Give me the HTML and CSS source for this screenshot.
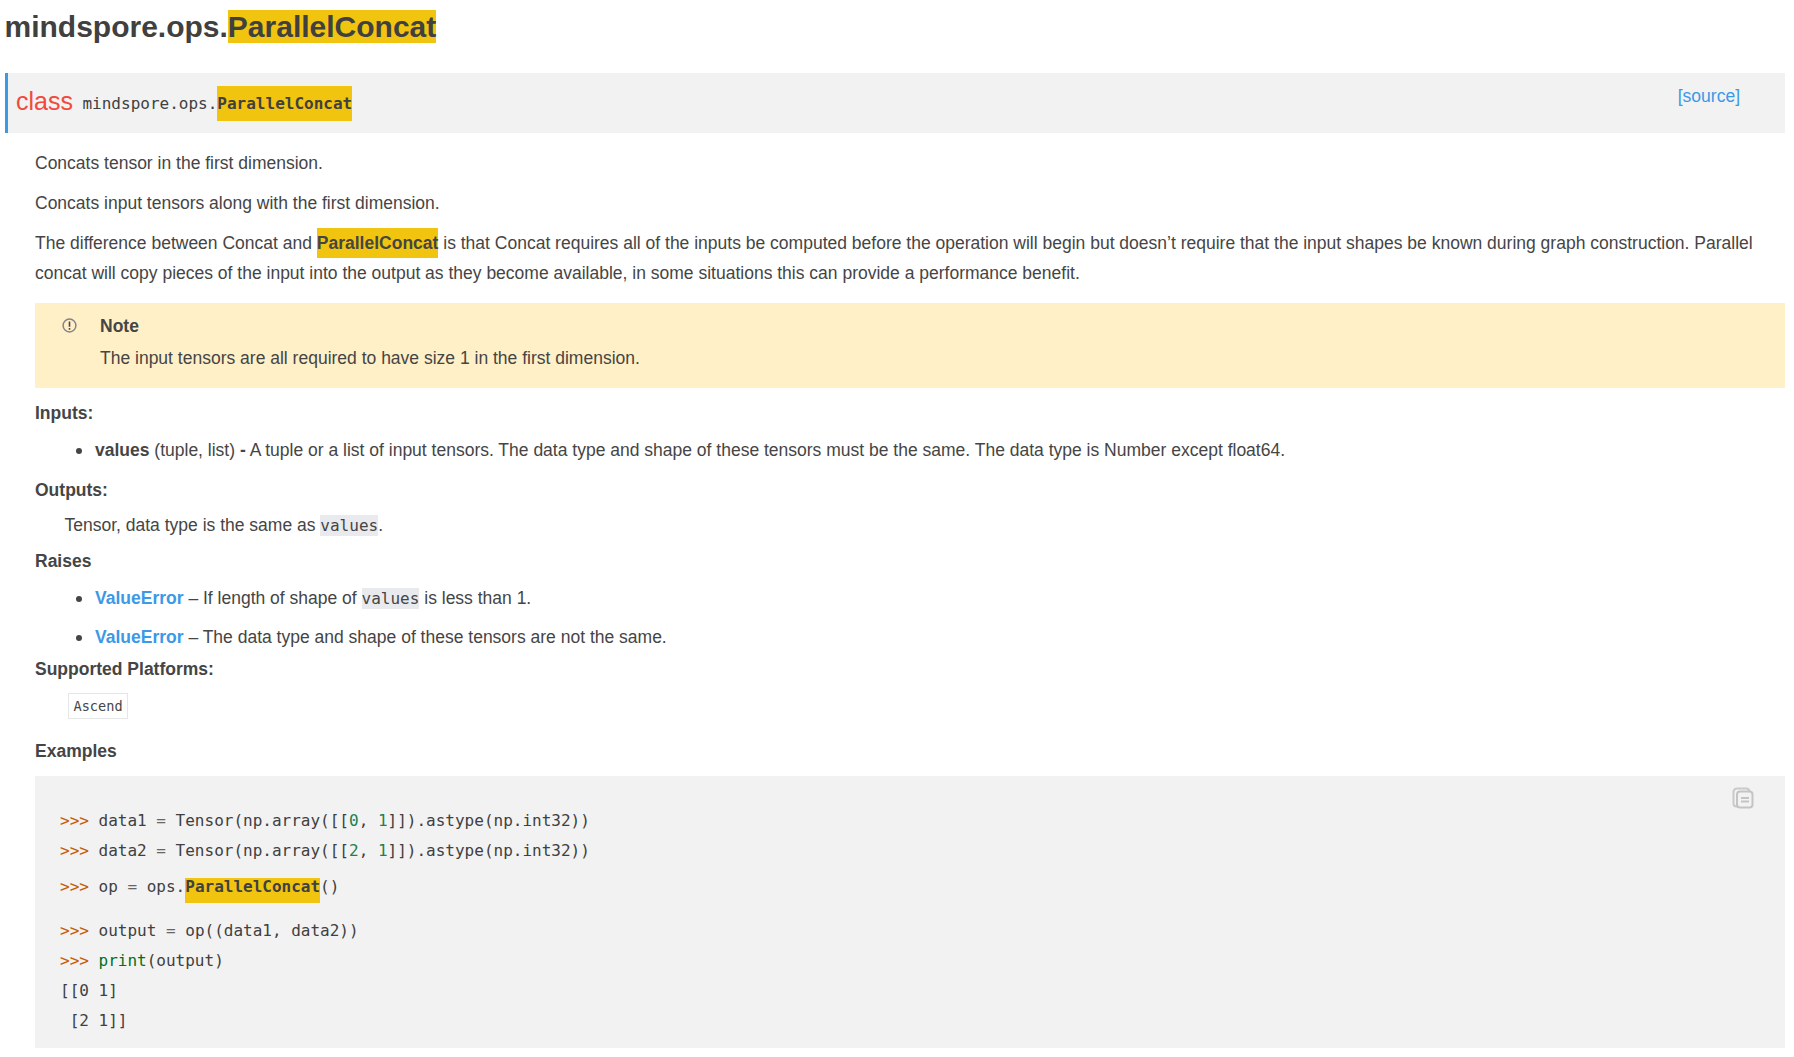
FILE: index.html
```html
<!DOCTYPE html>
<html lang="en">
<head>
<meta charset="utf-8">
<title>mindspore.ops.ParallelConcat</title>
<link rel="stylesheet" href="styles.css">
</head>
<body>
<main class="page">
  <h1 class="title">mindspore.ops.<span class="hl">ParallelConcat</span></h1>
  <section class="api">
    <div class="sig">
      <div class="sig-name">
        <span class="kw">class</span>
        <code class="sig-code">mindspore.ops.<span class="hl sig-hl">ParallelConcat</span></code>
      </div>
      <a class="source" href="#">[source]</a>
    </div>
    <div class="doc">
      <p class="p p-first">Concats tensor in the first dimension.</p>
      <p class="p p-next">Concats input tensors along with the first dimension.</p>
      <p class="p p-next">The difference between Concat and <strong class="hl para-hl">ParallelConcat</strong> is that Concat requires all of the inputs be computed before the operation will begin but doesn’t require that the input shapes be known during graph construction. Parallel concat will copy pieces of the input into the output as they become available, in some situations this can provide a performance benefit.</p>
      <aside class="note">
        <svg class="note-icon" viewBox="0 0 15 15" width="15" height="15" aria-hidden="true"><circle cx="7.500" cy="7.500" r="6.400" fill="none" stroke="#858585" stroke-width="1.500"/><path d="M7.500 3.400v5.400M7.500 10v1.700" stroke="#4a4a4a" stroke-width="1.600" fill="none"/></svg>
        <div class="note-body">
          <div class="note-title">Note</div>
          <div class="note-text">The input tensors are all required to have size 1 in the first dimension.</div>
        </div>
      </aside>
      <div class="label label-inputs">Inputs:</div>
      <ul class="list list-inputs">
        <li><strong>values</strong> (tuple, list) <strong>-</strong> A tuple or a list of input tensors. The data type and shape of these tensors must be the same. The data type is Number except float64.</li>
      </ul>
      <div class="label label-outputs">Outputs:</div>
      <p class="p outputs-text">Tensor, data type is the same as <code class="chip">values</code>.</p>
      <div class="label label-raises">Raises</div>
      <ul class="list list-raises">
        <li><a class="link" href="#">ValueError</a> – If length of shape of <code class="chip">values</code> is less than 1.</li>
        <li class="li-next"><a class="link" href="#">ValueError</a> – The data type and shape of these tensors are not the same.</li>
      </ul>
      <div class="label label-platforms">Supported Platforms:</div>
      <code class="platform">Ascend</code>
      <div class="label label-examples">Examples</div>
      <div class="code">
        <svg class="copy" viewBox="0 0 22 22" width="22" height="22" aria-hidden="true"><path d="M6 19.500H4.500A3 3 0 0 1 1.500 16.500V5A3.500 3.500 0 0 1 5 1.500H14A3.500 3.500 0 0 1 17.500 4" fill="none" stroke="#c9c9c9" stroke-width="2"/><rect x="5" y="4.500" width="15.500" height="16" rx="3" fill="#f2f2f2" stroke="#c4c4c4" stroke-width="2"/><path d="M9 11h8M9 14.500h8" stroke="#c4c4c4" stroke-width="1.800" fill="none"/></svg>
        <div class="line"><span class="gp">&gt;&gt;&gt; </span>data1 <span class="o">=</span> Tensor(np.array([[<span class="m">0</span>, <span class="m">1</span>]]).astype(np.int32))</div>
        <div class="line"><span class="gp">&gt;&gt;&gt; </span>data2 <span class="o">=</span> Tensor(np.array([[<span class="m">2</span>, <span class="m">1</span>]]).astype(np.int32))</div>
        <div class="line line-hl"><span class="gp">&gt;&gt;&gt; </span>op <span class="o">=</span> ops.<span class="hl code-hl">ParallelConcat</span>()</div>
        <div class="line"><span class="gp">&gt;&gt;&gt; </span>output <span class="o">=</span> op((data1, data2))</div>
        <div class="line"><span class="gp">&gt;&gt;&gt; </span><span class="nb">print</span>(output)</div>
        <div class="line">[[0 1]</div>
        <div class="line"> [2 1]]</div>
      </div>
    </div>
  </section>
</main>
</body>
</html>
```

FILE: styles.css
```css
html, body {
  margin: 0;
  background: #fff;
}
body {
  font-family: "Liberation Sans", Arial, sans-serif;
  font-size: 17.5px;
  line-height: 30px;
  color: #454545;
}
code, .code {
  font-family: "DejaVu Sans Mono", monospace;
}
.page {
  padding: 0 9px 9px 5px;
}
.title {
  margin: 0;
  font-size: 30px;
  line-height: 53px;
  font-weight: 700;
  color: #404040;
  margin-left: -0.5px;
}
.title .hl {
  display: inline-block;
  line-height: 33px;
}
.hl {
  background: #f1c40f;
}
.sig {
  margin-top: 20px;
  height: 60px;
  box-sizing: border-box;
  border-left: 3px solid #3b9ae6;
  background: #f2f2f2;
  padding: 0 45px 0 8px;
  display: flex;
  justify-content: space-between;
  align-items: flex-start;
}
.sig-name {
  display: flex;
  align-items: center;
  height: 60px;
}
.kw {
  font-size: 25px;
  color: #f04a3c;
  margin-right: 9.5px;
  position: relative;
  top: -2px;
}
.sig-code {
  font-size: 16px;
  color: #404040;
  white-space: pre;
}
.sig-hl {
  display: inline-block;
  font-weight: 700;
  line-height: 35px;
}
.source {
  font-size: 17.500px;
  color: #3b99e8;
  text-decoration: none;
  line-height: 30px;
  margin-top: 8px;
}
.doc {
  margin-left: 30px;
}
.p {
  margin: 0;
}
.p-first {
  margin-top: 15px;
}
.p-next {
  margin-top: 10px;
}
.para-hl {
  display: inline-block;
}
.note {
  margin-top: 15px;
  background: #fff0c7;
  padding: 8px 0 15px 27px;
  display: flex;
  gap: 23px;
}
.note-icon {
  margin-top: 7px;
  flex: none;
}
.note-title {
  font-weight: 700;
}
.note-text {
  margin-top: 2px;
}
.label {
  font-weight: 700;
}
.label-inputs { margin-top: 10px; }
.label-outputs { margin-top: 10px; }
.label-raises { margin-top: 6px; }
.label-platforms { margin-top: 2px; }
.label-examples { margin-top: 17px; }
.list {
  margin: 0;
  padding-left: 60px;
  list-style: none;
}
.list li {
  position: relative;
}
.list li::before {
  content: "";
  position: absolute;
  left: -19px;
  top: 13px;
  width: 6px;
  height: 6px;
  border-radius: 50%;
  background: #454545;
}
.list-inputs { margin-top: 7px; }
.list-raises { margin-top: 7px; }
.li-next { margin-top: 9px; }
.outputs-text {
  margin-top: 5px;
  margin-left: 29.5px;
}
.chip {
  font-size: 16px;
  line-height: 1;
  background: #e9eaee;
  padding: 1px 0;
}
.link {
  color: #3b99e8;
  font-weight: 700;
  text-decoration: none;
}
.platform {
  display: block;
  width: fit-content;
  margin: 9px 0 0 33px;
  box-sizing: border-box;
  height: 26px;
  padding: 0 4.5px;
  border: 1px solid #e4e6e8;
  font-size: 13.6px;
  line-height: 24px;
}
.code {
  position: relative;
  margin-top: 10px;
  background: #f2f2f2;
  padding: 30px 0 12px 25px;
  font-size: 16px;
  color: #404040;
}
.line {
  height: 30px;
  white-space: pre;
}
.line-hl {
  height: 44px;
  padding-top: 6px;
}
.code-hl {
  display: inline-block;
  font-weight: 700;
  line-height: 18px;
  padding-bottom: 7px;
}
.gp { color: #c65d09; }
.o { color: #666; }
.m { color: #208050; }
.nb { color: #007020; }
.copy {
  position: absolute;
  top: 11px;
  right: 31px;
}
```
